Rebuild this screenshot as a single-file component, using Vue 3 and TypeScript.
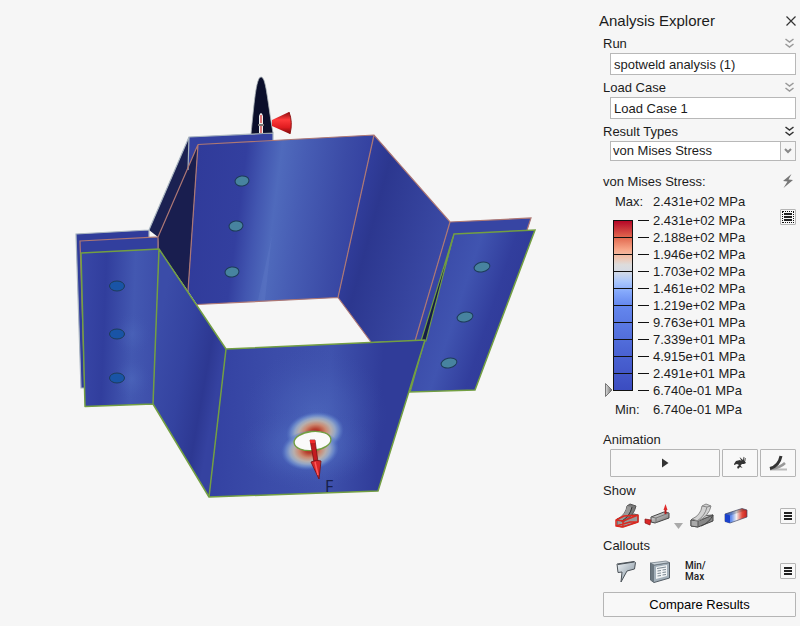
<script setup lang="ts">
import { ref } from 'vue'

interface Level {
  value: string
}

const run = ref('spotweld analysis (1)')
const loadCase = ref('Load Case 1')
const resultType = ref('von Mises Stress')
const resultTypes: string[] = ['von Mises Stress', 'Displacement', 'Factor of Safety']

const levels: Level[] = [
  '2.431e+02', '2.188e+02', '1.946e+02', '1.703e+02', '1.461e+02', '1.219e+02',
  '9.763e+01', '7.339e+01', '4.915e+01', '2.491e+01', '6.740e-01',
].map((value) => ({ value }))

const dividers: number[] = Array.from({ length: 9 }, (_, i) => (i + 1) * 17 + 0.5)

const backWelds = [[242, 181], [236, 226], [232, 272]]
const leftWelds = [[117, 286], [117, 334], [117, 378]]
const rightWelds = [[482, 267], [465, 317], [449, 363]]
</script>

<template>
  <div class="app">
    <main class="viewport">
      <svg class="model" viewBox="0 0 597 626" preserveAspectRatio="xMinYMin meet" role="img" aria-label="Stress plot">
        <defs>
          <linearGradient id="gBack" gradientUnits="userSpaceOnUse" x1="190" y1="210" x2="362" y2="232">
            <stop offset="0" stop-color="#303b9a" />
            <stop offset=".28" stop-color="#333f9f" />
            <stop offset=".38" stop-color="#4256b0" />
            <stop offset=".48" stop-color="#4f6abc" />
            <stop offset=".62" stop-color="#475db4" />
            <stop offset=".85" stop-color="#3b4ba6" />
            <stop offset="1" stop-color="#3441a0" />
          </linearGradient>
          <linearGradient id="gRight" gradientUnits="userSpaceOnUse" x1="345" y1="220" x2="440" y2="246">
            <stop offset="0" stop-color="#3340a0" />
            <stop offset=".28" stop-color="#2c378f" />
            <stop offset="1" stop-color="#3a49a4" />
          </linearGradient>
          <linearGradient id="gFlangeR" gradientUnits="userSpaceOnUse" x1="430" y1="300" x2="508" y2="326">
            <stop offset="0" stop-color="#3b4ca9" />
            <stop offset=".35" stop-color="#4054b0" />
            <stop offset=".75" stop-color="#323e9d" />
            <stop offset="1" stop-color="#303b99" />
          </linearGradient>
          <linearGradient id="gFlangeL" gradientUnits="userSpaceOnUse" x1="81" y1="330" x2="157" y2="333">
            <stop offset="0" stop-color="#3846a6" />
            <stop offset=".3" stop-color="#313e9d" />
            <stop offset=".68" stop-color="#4358b1" />
            <stop offset="1" stop-color="#3d4eaa" />
          </linearGradient>
          <linearGradient id="gSide" gradientUnits="userSpaceOnUse" x1="155" y1="350" x2="222" y2="362">
            <stop offset="0" stop-color="#3b4ca8" />
            <stop offset=".45" stop-color="#3443a0" />
            <stop offset=".8" stop-color="#2d3892" />
            <stop offset="1" stop-color="#3542a0" />
          </linearGradient>
          <linearGradient id="gFront" gradientUnits="userSpaceOnUse" x1="215" y1="420" x2="402" y2="430">
            <stop offset="0" stop-color="#3442a2" />
            <stop offset=".3" stop-color="#3b4ca9" />
            <stop offset=".6" stop-color="#3f52ad" />
            <stop offset=".88" stop-color="#303c99" />
            <stop offset="1" stop-color="#303c99" />
          </linearGradient>
          <radialGradient id="gGlow">
            <stop offset="0" stop-color="#5c7fcc" stop-opacity=".9" />
            <stop offset=".5" stop-color="#4f6cc0" stop-opacity=".6" />
            <stop offset="1" stop-color="#4257b0" stop-opacity="0" />
          </radialGradient>
          <radialGradient id="gHot">
            <stop offset="0" stop-color="#a81c20" />
            <stop offset=".16" stop-color="#b8402e" />
            <stop offset=".38" stop-color="#cc8a72" />
            <stop offset=".56" stop-color="#b8afac" />
            <stop offset=".7" stop-color="#94a6c6" />
            <stop offset=".84" stop-color="#6a88ca" stop-opacity=".85" />
            <stop offset="1" stop-color="#5270c2" stop-opacity="0" />
          </radialGradient>
          <linearGradient id="gCone" x1="0" y1="0" x2="0" y2="1">
            <stop offset="0" stop-color="#8c0c10" />
            <stop offset=".35" stop-color="#ff3a3a" />
            <stop offset=".7" stop-color="#e01c20" />
            <stop offset="1" stop-color="#780808" />
          </linearGradient>
        </defs>

        <!-- outer shell behind -->
        <path d="M76 234 149 230V244L85 260 84 388H81Z" fill="#303c9a" />
        <path d="M158 237 80 241 85 395 100 300 159 250Z" fill="#323f9e" />
        <path d="M189 137 273 133V142L198 147 187 172Z" fill="#3441a0" />
        <path d="M149 230 189 137 188 170 158 237Z" fill="#1b2152" />
        <path d="M158 237 198 144 188 291 159 249Z" fill="#191e4f" />
        <path d="M84 388H81L76 234 149 230 189 137 273 133V140M149 230V238M189 137 188 170" fill="none" stroke="#a9b5c0" stroke-width="1.2" />
        <path d="M251 134C254 105 256 77 261 77S267 98 273 133Z" fill="#0b0f2b" stroke="#aab2b8" stroke-width=".8" />
        <path d="M259 133V116Q261 110 263 116V133" fill="#eee" />
        <path d="M261 115V123M261 126V133" stroke="#d62b2b" stroke-width="1.2" />
        <path d="M258 125H264" stroke="#777" stroke-width="2" />
        <path d="M272 120 289 112Q293 122 290 134L272 126Z" fill="url(#gCone)" />
        <path d="M289 112Q293 122 290 134" fill="none" stroke="#8f1414" />

        <!-- inner shell -->
        <path d="M198 144.500 374 135 338 297.500 197 304.500 188 291Z" fill="url(#gBack)" />
        <path d="M272 235 265 300H258Z" fill="#6d88d0" opacity=".2" />
        <path d="M374 135 450 222 415 341 371 342 338 297.500Z" fill="url(#gRight)" />
        <path d="M450 222 531 218 527 231 454 235 424 341H415Z" fill="#3745a3" />
        <path d="M85 395 80 241 158 237V249M158 237 198 144.500 188 291M198 144.500 374 135 450 222 531 218 527 230M374 135 338 297.500 197 304.500M338 297.500 371 342M450 222 415 341" fill="none" stroke="#ad7774" stroke-width="1.2" />

        <!-- right flange -->
        <path d="M454 234 535 230 475 390 410 392Z" fill="url(#gFlangeR)" stroke="#739f42" stroke-width="1.5" />
        <path d="M453 237 421 341H426Z" fill="#151c48" stroke="#709c45" stroke-width="1.2" />

        <!-- outer shell in front -->
        <path d="M81 253 159 249 153 404 85 406.500Z" fill="url(#gFlangeL)" />
        <ellipse cx="132" cy="334" rx="19" ry="22" fill="url(#gGlow)" opacity=".25" />
        <ellipse cx="132" cy="379" rx="19" ry="22" fill="url(#gGlow)" opacity=".3" />
        <path d="M159 249 226 349 209 497 153 404Z" fill="url(#gSide)" />
        <path d="M226 349 425 340 378 491 209 497Z" fill="url(#gFront)" />
        <ellipse cx="315" cy="415" rx="72" ry="68" fill="url(#gGlow)" opacity=".45" />
        <ellipse cx="308" cy="448" rx="70" ry="42" fill="url(#gGlow)" opacity=".6" />
        <path d="M81 253 159 249 153 404 85 406.500ZM159 249 226 349 209 497 153 404M226 349 425 340 378 491 209 497M425 340 378 491" fill="none" stroke="#739f42" stroke-width="1.5" stroke-linejoin="round" />

        <!-- hole and stress concentration -->
        <ellipse cx="315" cy="432" rx="29" ry="20" fill="url(#gHot)" transform="rotate(-8 315 432)" />
        <ellipse cx="310" cy="450" rx="29" ry="20" fill="url(#gHot)" transform="rotate(-8 310 450)" />
        <ellipse cx="312.500" cy="441" rx="18.500" ry="9.500" fill="#fafafa" stroke="#739f42" stroke-width="1.4" transform="rotate(-6 312.500 441)" />
        <path d="M310 440H315L318 462H314Z" fill="#c41b1f" stroke="#6d1013" stroke-width=".7" />
        <path d="M310 440H315V443H310Z" fill="#ef2b2b" />
        <path d="M311 462Q316 459 321 461L319 479Z" fill="#d7262a" stroke="#701014" stroke-width=".8" />
        <path d="M315 462 318 475" stroke="#ff5a5a" stroke-width="1.5" />
        <text x="325" y="492" class="force">F</text>

        <g stroke="#1d3c58" stroke-width="1">
          <ellipse v-for="w in backWelds" :key="w[1]" :cx="w[0]" :cy="w[1]" rx="7" ry="5" fill="#47839f" :transform="`rotate(-8 ${w[0]} ${w[1]})`" />
          <ellipse v-for="w in leftWelds" :key="w[1]" :cx="w[0]" :cy="w[1]" rx="7.500" ry="5" fill="#1954a6" />
          <ellipse v-for="w in rightWelds" :key="w[1]" :cx="w[0]" :cy="w[1]" rx="8" ry="4.800" fill="#47839f" :transform="`rotate(-12 ${w[0]} ${w[1]})`" />
        </g>
      </svg>
    </main>

    <aside class="panel">
      <header class="title-bar">
        <h1>Analysis Explorer</h1>
        <button class="plain" aria-label="Close">
          <svg width="10" height="10" viewBox="0 0 10 10"><path d="M.5.5 9.500 9.500M9.500.5.5 9.500" stroke="#333" stroke-width="1.2" /></svg>
        </button>
      </header>

      <div class="field">
        <div class="head">
          <label for="run">Run</label>
          <button class="plain light" aria-label="Expand run">
            <svg width="9" height="10" viewBox="0 0 9 10"><path d="M.5 1 4.500 4 8.500 1M.5 6 4.500 9 8.500 6" /></svg>
          </button>
        </div>
        <input id="run" v-model="run" type="text">
      </div>

      <div class="field">
        <div class="head">
          <label for="case">Load Case</label>
          <button class="plain light" aria-label="Expand load case">
            <svg width="9" height="10" viewBox="0 0 9 10"><path d="M.5 1 4.500 4 8.500 1M.5 6 4.500 9 8.500 6" /></svg>
          </button>
        </div>
        <input id="case" v-model="loadCase" type="text">
      </div>

      <div class="field">
        <div class="head">
          <label for="type">Result Types</label>
          <button class="plain dark" aria-label="Expand result types">
            <svg width="9" height="10" viewBox="0 0 9 10"><path d="M.5 1 4.500 4 8.500 1M.5 6 4.500 9 8.500 6" /></svg>
          </button>
        </div>
        <div class="combo">
          <select id="type" v-model="resultType">
            <option v-for="t in resultTypes" :key="t">{{ t }}</option>
          </select>
          <span class="arrow">
            <svg width="8" height="6" viewBox="0 0 8 6"><path d="M1 1 4 4 7 1" fill="none" stroke="#888" stroke-width="2" /></svg>
          </span>
        </div>
      </div>

      <section class="legend">
        <div class="head">
          <h2>von Mises Stress:</h2>
          <button class="plain" aria-label="Recalculate">
            <svg width="12" height="14" viewBox="0 0 12 14"><path d="M9.500 0 1 7 5.500 7.500 1.500 14 11 6 6.500 5.500Z" fill="#777" /></svg>
          </button>
        </div>
        <div class="extreme"><span>Max:</span><span>2.431e+02 MPa</span></div>
        <div class="scale">
          <svg class="bar" width="29" height="187" viewBox="0 0 29 187" aria-hidden="true">
            <defs>
              <linearGradient id="gScale" x1="0" y1="0" x2="0" y2="1">
                <stop offset="0" stop-color="#b40426" />
                <stop offset=".1" stop-color="#e2694f" />
                <stop offset=".17" stop-color="#f7a688" />
                <stop offset=".22" stop-color="#efc5b0" />
                <stop offset=".26" stop-color="#dddcdc" />
                <stop offset=".3" stop-color="#d5dbe5" />
                <stop offset=".36" stop-color="#aac7fd" />
                <stop offset=".42" stop-color="#84a8fb" />
                <stop offset=".5" stop-color="#6487ee" />
                <stop offset=".75" stop-color="#4d67d6" />
                <stop offset="1" stop-color="#3b4cc0" />
              </linearGradient>
              <linearGradient id="gMark"><stop offset="0" stop-color="#ddd" /><stop offset="1" stop-color="#666" /></linearGradient>
            </defs>
            <rect x="9.500" y="8.500" width="19" height="170" fill="url(#gScale)" stroke="#111" />
            <path v-for="y in dividers" :key="y" :d="`M9 ${y + 8}H29`" stroke="#111" />
            <path d="M1.500 171.500V184.500L8 178Z" fill="url(#gMark)" stroke="#777" />
          </svg>
          <ul>
            <li v-for="l in levels" :key="l.value"><i class="tick"></i>{{ l.value }} MPa</li>
          </ul>
          <button class="menu focus" aria-label="Legend options"><span class="lines"></span></button>
        </div>
        <div class="extreme"><span>Min:</span><span>6.740e-01 MPa</span></div>
      </section>

      <section class="animation">
        <h2>Animation</h2>
        <div class="buttons">
          <button class="box" aria-label="Play">
            <svg width="8" height="10" viewBox="0 0 8 10"><path d="M1 .5V9.500L7.500 5Z" fill="#333" /></svg>
          </button>
          <button class="box" aria-label="Animation speed">
            <svg width="16" height="16" viewBox="0 0 16 16"><path d="M2 9 4 6 8 5 9.500 6 7.500 2 11 5 11 1.500 12.500 5.500 14 8 12 9 10 9 8.500 10.500 10.500 13 8 12 6 14 5 12 7 10 5 9 2 10Z" fill="#333" /><path d="M12 5V2M13 6 13.500 3" stroke="#777" /></svg>
          </button>
          <button class="box" aria-label="Deformation scale">
            <svg width="20" height="18" viewBox="0 0 20 18" fill="none"><path d="M2 15.500H19" stroke="#bbb" stroke-width="2" /><path d="M2 15Q12 14 17 9" stroke="#999" stroke-width="2.500" /><path d="M2 14.500Q11 12 13 2" stroke="#333" stroke-width="3" /></svg>
          </button>
        </div>
      </section>

      <section class="show">
        <h2>Show</h2>
        <div class="tools show-tools">
          <svg class="defs" width="0" height="0" aria-hidden="true">
            <defs>
              <linearGradient id="gMetal" x1="0" y1="0" x2="1" y2="1"><stop offset="0" stop-color="#eee" /><stop offset="1" stop-color="#666" /></linearGradient>
              <linearGradient id="gSteel" x1="0" y1="0" x2="1" y2="1"><stop offset="0" stop-color="#eef3f6" /><stop offset="1" stop-color="#7d8c99" /></linearGradient>
              <linearGradient id="gHeat"><stop offset="0" stop-color="#2450e0" /><stop offset=".3" stop-color="#6e95ef" /><stop offset=".52" stop-color="#f1eeee" /><stop offset=".78" stop-color="#e14a3c" /><stop offset="1" stop-color="#c81e1c" /></linearGradient>
            </defs>
          </svg>
          <button class="plain" aria-label="Undeformed shape">
            <svg width="26" height="26" viewBox="0 0 26 26" stroke-linejoin="round">
              <path d="M3 16 10 13 20 11 24 12V19L8 24 3 23Z" fill="#999" stroke="#555" />
              <path d="M4 16Q12 11 13 3L16 1 22 3Q20 13 9 19Z" fill="#777" stroke="#555" />
              <path d="M4 16Q12 11 13 3L18 4Q16 13 8 18Z" fill="#999" /><path d="M8 18Q16 13 18 4" fill="none" stroke="#333" />
              <path d="M2 17 9 18 24 12V19L9 24 2 23ZM9 18V24M2 17 10 13 24 12M2 23 16 19 24 19" fill="none" stroke="#dc281f" stroke-width="1.500" />
            </svg>
          </button>
          <button class="plain" aria-label="Loads and supports">
            <svg width="28" height="26" viewBox="0 0 28 26">
              <path d="M7 14 20 9 25 10V15L11 20 7 19Z" fill="url(#gMetal)" stroke="#444" /><path d="M7 14 12 15 25 10M12 15V20" fill="none" stroke="#777" />
              <path d="M21.500 11V5" stroke="#b51c1c" stroke-width="2" /><path d="M19.500 7 21.500 1 23.500 7Z" fill="#df2a2a" />
              <path d="M1 16 7 17 6 22 1 20Z" fill="#d92727" stroke="#841414" stroke-width=".7" />
            </svg>
          </button>
          <button class="plain low" aria-label="More loads">
            <svg width="9" height="6" viewBox="0 0 9 6"><path d="M0 0H9L4.500 6Z" fill="#aaa" /></svg>
          </button>
          <button class="plain" aria-label="Deformed shape">
            <svg width="26" height="26" viewBox="0 0 26 26" stroke-linejoin="round">
              <path d="M2 17 9 18 24 12V18L9 24 2 23Z" fill="#888" stroke="#444" />
              <path d="M2 17 10 13 24 12 9 18Z" fill="#ccc" stroke="#555" /><path d="M2 17 9 18V24L2 23Z" fill="#aaa" stroke="#555" />
              <path d="M3 16Q12 12 13 3L17 1 22 3Q20 13 9 18Z" fill="#d2d2d2" stroke="#888" /><path d="M8 18Q16 13 18 4L13 3M18 4 22 3" fill="none" stroke="#888" />
              <path d="M12 23Q20 20 24 12" fill="none" stroke="#444" />
            </svg>
          </button>
          <button class="plain" aria-label="Contours">
            <svg width="26" height="26" viewBox="0 0 26 26"><path d="M2 11 19 5.500 24 7V14L7 20 2 18.500Z" fill="url(#gHeat)" stroke="#444b66" stroke-width=".7" /><path d="M2 11 7 12.500V20L2 18.500Z" fill="#1a41cd" /><path d="M7 12.500 24 7 19 5.500 2 11Z" fill="#333" opacity=".25" /></svg>
          </button>
          <button class="menu" aria-label="Show options"><span class="lines"></span></button>
        </div>
      </section>

      <section class="callouts">
        <h2>Callouts</h2>
        <div class="tools callout-tools">
          <button class="plain" aria-label="Add callout">
            <svg width="26" height="26" viewBox="0 0 26 26"><path d="M3 6 20 3.500 21.500 4.500 20.500 11 13 13 7 24 8 14 4 14.500Z" fill="url(#gSteel)" stroke="#4b5258" /><path d="M4 6.500 20 4" stroke="#4b5258" /></svg>
          </button>
          <button class="plain" aria-label="Callout table">
            <svg width="26" height="26" viewBox="0 0 26 26"><path d="M2.500 5 6 7 21.500 4.500V20L6 24.500 2.500 22Z" fill="#a3b0ba" stroke="#555e66" /><path d="M2.500 5 18 3 21.500 4.500 6 7Z" fill="#cbd4da" stroke="#67737d" stroke-width=".7" /><path d="M2.500 5 6 7V24.500L2.500 22Z" fill="#6d7982" /><path d="M8 9 19 7V18L8 21Z" fill="#f0f3f5" /><path d="M9 10.500 18 9M9.500 13 13 12.500M14.500 12 18 11.500M9.500 15.500 13 15M14.500 14.500 18 14M9.500 18 13 17.500M14.500 17 18 16.500" stroke="#7b8892" /></svg>
          </button>
          <button class="plain minmax">Min/<br>Max</button>
          <button class="menu" aria-label="Callout options"><span class="lines"></span></button>
        </div>
      </section>

      <button class="box compare">Compare Results</button>
    </aside>
  </div>
</template>

<style>
body {
  margin: 0;
  background: #f6f6f6;
}
</style>

<style scoped>
.app {
  display: flex;
  align-items: flex-start;
  min-height: 100vh;
  color: #1c1c1c;
  background: #f6f6f6;
  font-family: "Liberation Sans", Arial, sans-serif;
  font-size: 13px;
  line-height: 20px;
}

.viewport {
  flex: 1;
  min-width: 0;
}

.model {
  display: block;
  width: 100%;
}

.force {
  font-family: "Noto Sans", sans-serif;
  font-size: 16px;
  fill: #17204c;
}

.panel {
  box-sizing: border-box;
  width: 203px;
  flex: none;
  padding: 8px 4px 8px 6px;
}

h1,
h2,
ul {
  margin: 0;
  padding: 0;
  font-weight: normal;
}

h1 {
  font-size: 15px;
}

h2 {
  height: 20px;
  font-size: 13px;
  line-height: 22px;
}

label {
  height: 20px;
  line-height: 22px;
}

button,
input,
select {
  box-sizing: border-box;
  margin: 0;
  font: inherit;
  color: inherit;
}

svg {
  display: block;
}

.title-bar {
  display: flex;
  align-items: center;
  justify-content: space-between;
  height: 25px;
  margin-left: -4px;
}

.plain {
  padding: 0;
  border: 0;
  background: none;
}

.head {
  display: flex;
  align-items: center;
  justify-content: space-between;
  height: 20px;
  padding-right: 2px;
}

.light path,
.dark path {
  fill: none;
  stroke: #999;
  stroke-width: 1.5;
}

.dark path {
  stroke: #333;
}

.field {
  margin-bottom: 2px;
}

.field input,
.combo {
  display: block;
  box-sizing: border-box;
  width: calc(100% - 7px);
  height: 22px;
  margin-left: 7px;
  border: 1px solid #b8b8b8;
  background: #fff;
}

.field input {
  padding: 0 3px;
}

.combo {
  display: flex;
  position: relative;
  height: 20px;
}

.combo select {
  width: 100%;
  padding: 0 18px 0 2px;
  border: 0;
  appearance: none;
  background: none;
  line-height: 18px;
}

.arrow {
  display: flex;
  position: absolute;
  top: 0;
  right: 0;
  bottom: 0;
  align-items: center;
  justify-content: center;
  width: 14px;
  border-left: 1px solid #b8b8b8;
  background: #f6f6f6;
  pointer-events: none;
}

.legend {
  margin-top: 10px;
}

.extreme {
  display: grid;
  grid-template-columns: 38px 1fr;
  height: 20px;
  padding-left: 12px;
  line-height: 22px;
}

.scale {
  display: flex;
  align-items: flex-start;
  margin: 1px 0 0;
}

.bar {
  flex: none;
  margin-left: 1px;
}

.scale ul {
  flex: 1;
  list-style: none;
  margin-left: 5px;
}

.scale li {
  display: flex;
  align-items: center;
  height: 17px;
  white-space: nowrap;
}

.tick {
  width: 11px;
  height: 1px;
  margin-right: 4px;
  background: #111;
}

.menu {
  display: flex;
  align-items: center;
  justify-content: center;
  width: 16px;
  height: 16px;
  padding: 0;
  border: 1px solid #b5b5b5;
  border-radius: 1px;
  background: #f8f8f8;
}

.scale .menu {
  margin-top: -3px;
}

.focus .lines {
  outline: 1px dotted #111;
  outline-offset: 1px;
}

.lines {
  width: 8px;
  height: 8px;
  background: linear-gradient(#222 0 2px, transparent 2px 3px, #222 3px 5px, transparent 5px 6px, #222 6px 8px);
}

.animation {
  margin-top: 10px;
}

.buttons {
  display: grid;
  grid-template-columns: 1fr 36px 36px;
  gap: 2px;
  padding-left: 7px;
}

.box {
  display: flex;
  align-items: center;
  justify-content: center;
  height: 28px;
  padding: 0;
  border: 1px solid #b5b5b5;
  border-radius: 1px;
  background: #f8f8f8;
}

.show,
.callouts {
  margin-top: 3px;
}

.tools {
  display: grid;
  align-items: center;
  height: 32px;
  padding-left: 11px;
}

.show-tools {
  grid-template-columns: 30px 30px 15px 34px 1fr 16px;
}

.show-tools .plain,
.callout-tools .plain {
  justify-self: start;
}

.callout-tools {
  grid-template-columns: 34px 37px 1fr 16px;
}

.defs {
  position: absolute;
}

.low {
  align-self: end;
  padding-bottom: 3px;
}

.minmax {
  font-family: Roboto, sans-serif;
  font-size: 10px;
  font-weight: 500;
  line-height: 11px;
  text-align: left;
}

.compare {
  width: 100%;
  height: 25px;
  margin-top: 5px;
  color: #000;
}
</style>
